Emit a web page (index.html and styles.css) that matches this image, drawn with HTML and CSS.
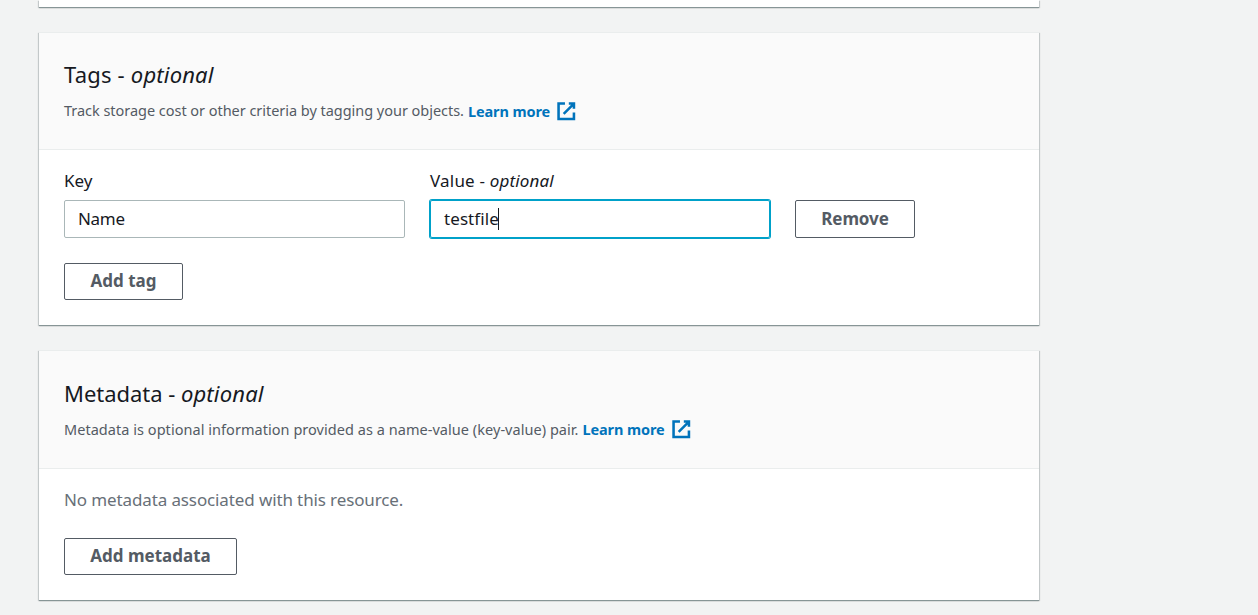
FILE: index.html
```html
<!DOCTYPE html>
<html lang="en">
<head>
<meta charset="utf-8">
<title>Upload objects</title>
<link rel="stylesheet" href="styles.css">
</head>
<body>
<main class="page">
  <section class="card card-previous"></section>

  <section class="card card-tags">
    <header class="card-header">
      <h2 class="title"><span class="title-tags">Tags - </span><em class="title-optional">optional</em></h2>
      <p class="description"><span class="description-tags">Track storage cost or other criteria by tagging your objects.</span> <a class="link link-tags" href="#"><span class="link-text">Learn more</span><svg class="external" viewBox="0 0 16 16"><path d="M10 2h4v4M6 10l8-8M14 9.048V14H2V2h5"/></svg></a></p>
    </header>
    <div class="card-body">
      <div class="tag-row">
        <label class="field"><span class="label">Key</span><span class="input"><span class="text-name">Name</span></span></label>
        <label class="field field-value"><span class="label"><span class="label-value">Value - </span><em class="label-optional">optional</em></span><span class="input input-focused"><span class="text-value">testfile</span><span class="caret"></span></span></label>
        <button class="button button-remove"><span class="text-remove">Remove</span></button>
      </div>
      <button class="button button-add button-add-tag"><span>Add tag</span></button>
    </div>
  </section>

  <section class="card card-metadata">
    <header class="card-header card-header-metadata">
      <h2 class="title"><span class="title-metadata">Metadata - </span><em class="title-optional">optional</em></h2>
      <p class="description"><span class="description-metadata">Metadata is optional information provided as a name-value (key-value) pair.</span> <a class="link" href="#"><span class="link-text">Learn more</span><svg class="external" viewBox="0 0 16 16"><path d="M10 2h4v4M6 10l8-8M14 9.048V14H2V2h5"/></svg></a></p>
    </header>
    <div class="card-body">
      <p class="empty">No metadata associated with this resource.</p>
      <button class="button button-add button-add-metadata"><span>Add metadata</span></button>
    </div>
  </section>
</main>
</body>
</html>
```

FILE: styles.css
```css
* { box-sizing: border-box; }

body {
  margin: 0;
  height: 615px;
  overflow: hidden;
  background: #f2f3f3;
  color: #16191f;
  font-family: "Noto Sans", "Open Sans", sans-serif;
}

.page {
  display: flex;
  flex-direction: column;
  width: 1000px;
  margin-left: 39px;
}

.card {
  background: #fff;
  border-top: 1px solid #eaeded;
  box-shadow: 0 1px 0 0 #879596, 0 1px 1px 0 rgba(0, 28, 36, 0.3), 1px 1px 1px 0 rgba(0, 28, 36, 0.15), -1px 1px 1px 0 rgba(0, 28, 36, 0.15);
}

.card-previous { height: 7px; border-top: 0; }
.card-tags { height: 293px; margin-top: 25px; }
.card-metadata { height: 250px; margin-top: 25px; }

.card-header {
  height: 117px;
  padding: 26px 25px 0;
  background: #fafafa;
  border-bottom: 1px solid #eaeded;
}

.card-header-metadata { height: 118px; padding-top: 27px; }

.title {
  height: 30px;
  margin: 0;
  font-size: 22px;
  font-weight: 400;
  line-height: 30px;
  white-space: pre;
}

.title-tags { letter-spacing: 0.2px; }
.title-metadata { letter-spacing: -0.04px; }
.title-optional { letter-spacing: 0.18px; }

.description {
  display: flex;
  align-items: center;
  gap: 4px;
  height: 22px;
  margin: 10px 0 0;
  color: #545b64;
  font-size: 14.5px;
  line-height: 22px;
  white-space: nowrap;
}

.description-tags { letter-spacing: -0.035px; }
.description-metadata { letter-spacing: 0.042px; }

.link {
  display: flex;
  align-items: center;
  color: #0073bb;
  font-weight: 700;
  text-decoration: none;
}

.link-tags { padding-top: 1px; }
.link-text { letter-spacing: -0.1px; }

.external {
  width: 20.5px;
  height: 20.5px;
  margin: 1px 0 0 6px;
  fill: none;
  stroke: currentColor;
  stroke-width: 2;
}

.card-body { padding: 19px 25px 0; }

.tag-row {
  display: flex;
  align-items: flex-end;
  gap: 25px;
}

.field { display: block; width: 341px; }
.field-value { width: 340px; }

.label {
  display: block;
  height: 31px;
  font-size: 17px;
  line-height: 24px;
  white-space: pre;
}

.label-value { letter-spacing: 0.2px; }
.label-optional { letter-spacing: 0.15px; }

.input {
  display: flex;
  align-items: center;
  height: 38px;
  padding: 0 13px;
  border: 1px solid #aab7b8;
  border-radius: 2px;
  font-size: 17px;
  line-height: 24px;
}

.input-focused {
  border-color: #00a1c9;
  box-shadow: 0 0 0 1px #00a1c9;
}

.text-name { letter-spacing: -0.3px; }
.text-value { letter-spacing: 0.08px; }

.caret { width: 1px; height: 22px; margin-left: -1px; background: #16191f; }

.button {
  display: flex;
  align-items: center;
  justify-content: center;
  height: 37px;
  padding: 0;
  background: #fff;
  border: 1px solid #545b64;
  border-radius: 2px;
  color: #545b64;
  font-family: inherit;
  font-size: 17px;
  font-weight: 700;
  line-height: 24px;
  white-space: nowrap;
}

.button-remove { width: 120px; height: 38px; }
.text-remove { letter-spacing: -0.1px; }
.button-add { padding-bottom: 2px; }
.button-add-tag { width: 119px; margin-top: 25px; }
.button-add-metadata { width: 173px; margin-top: 26px; }

.empty {
  height: 24px;
  margin: 0;
  color: #687078;
  font-size: 17px;
  letter-spacing: -0.12px;
  line-height: 24px;
}
```
